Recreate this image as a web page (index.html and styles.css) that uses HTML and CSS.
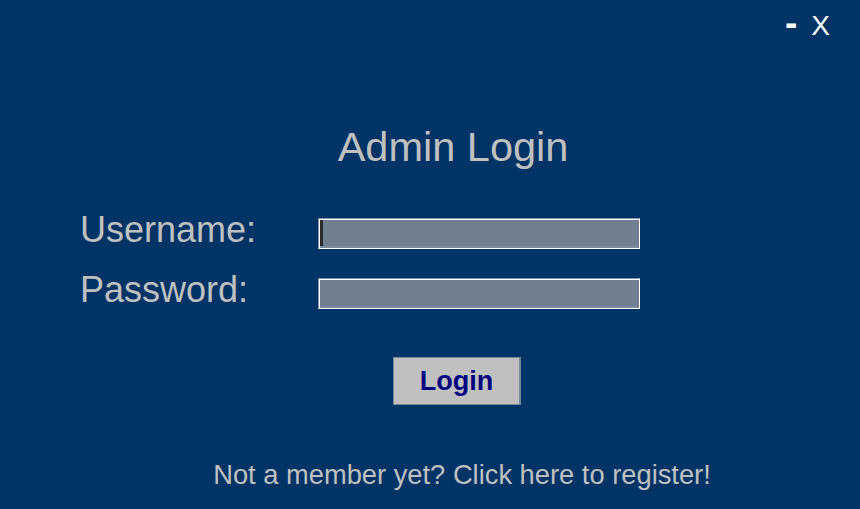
FILE: index.html
```html
<!DOCTYPE html>
<html lang="en">
<head>
<meta charset="utf-8">
<title>Admin Login</title>
<link rel="stylesheet" href="styles.css">
</head>
<body>
<div class="window">
  <div class="titlebar"><span class="ctl ctl-min">-</span><span class="ctl">X</span></div>
  <h1 class="title">Admin Login</h1>
  <form class="form">
    <div class="row">
      <label class="label">Username:</label>
      <span class="field-wrap has-caret"><input class="field" type="text"></span>
    </div>
    <div class="row">
      <label class="label">Password:</label>
      <span class="field-wrap"><input class="field" type="password"></span>
    </div>
  </form>
  <div class="actions"><button class="btn" type="button">Login</button></div>
  <p class="register">Not a member yet? Click here to register!</p>
</div>
</body>
</html>
```

FILE: styles.css
```css
html, body {
  margin: 0;
  padding: 0;
  background: #003366;
}
body {
  font-family: "Liberation Sans", Arial, sans-serif;
  color: #c0c0c0;
  width: 860px;
  height: 509px;
  overflow: hidden;
}
.window {
  display: flex;
  flex-direction: column;
}
.titlebar {
  display: flex;
  justify-content: flex-end;
  align-items: baseline;
  gap: 14px;
  padding: 7px 30px 0 0;
  height: 32px;
  font-size: 28px;
  line-height: 32px;
  color: #ffffff;
}
.ctl-min {
  font-size: 37px;
  font-weight: bold;
}
.title {
  margin: 85px 0 0;
  padding-left: 46px;
  text-align: center;
  font-size: 41.5px;
  font-weight: normal;
  line-height: 46px;
}
.form {
  margin: 48px 0 0;
  display: flex;
  flex-direction: column;
  gap: 29px;
  padding-left: 80px;
}
.row {
  display: flex;
  align-items: flex-start;
  height: 31px;
}
.label {
  width: 238px;
  font-size: 36px;
  line-height: 31px;
  margin-top: -4px;
}
.field-wrap {
  position: relative;
  display: block;
}
.field {
  display: block;
  box-sizing: border-box;
  width: 322px;
  height: 31px;
  margin: 0;
  padding: 0;
  background: #708090;
  border: 1px solid;
  border-color: #8593a6 #ffffff #ffffff #8593a6;
  box-shadow: inset 1px 1px 0 #ffffff, inset 0 -2px 0 #7c8a9b;
  outline: none;
}
.has-caret::after {
  content: "";
  position: absolute;
  left: 2px;
  top: 2px;
  width: 3px;
  height: 26px;
  background: #2b2b2b;
}
.actions {
  margin-top: 48px;
  padding-left: 54px;
  display: flex;
  justify-content: center;
}
.btn {
  box-sizing: border-box;
  width: 128px;
  height: 48px;
  background: #c0c0c0;
  border: 1px solid #7a8799;
  border-right-width: 2px;
  font-family: "Liberation Sans", Arial, sans-serif;
  font-size: 27px;
  font-weight: bold;
  color: #000080;
  padding: 0;
}
.register {
  margin: 54px 0 0;
  padding-left: 64px;
  text-align: center;
  font-size: 27.3px;
  line-height: 32px;
}
```
